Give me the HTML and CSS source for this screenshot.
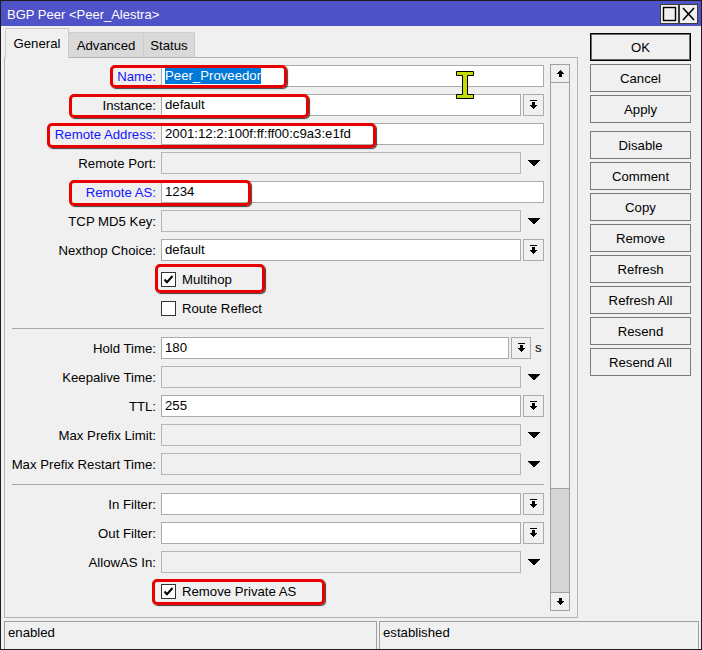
FILE: index.html
```html
<!DOCTYPE html>
<html>
<head>
<meta charset="utf-8">
<title>BGP Peer</title>
<link rel="stylesheet" href="styles.css">
</head>
<body>
<div class="window">
  <div class="titlebar">
    <span class="title">BGP Peer &lt;Peer_Alestra&gt;</span>
    <div class="tbtns">
      <span class="tbtn"><svg width="17" height="18" viewBox="0 0 17 18"><rect x="2.5" y="2.5" width="12" height="13" fill="none" stroke="#000" stroke-width="1.4"/></svg></span>
      <span class="tbtn"><svg width="17" height="18" viewBox="0 0 17 18"><path d="M3 3L14 15M14 3L3 15" stroke="#000" stroke-width="1.6"/></svg></span>
    </div>
  </div>

  <div class="body">
    <div class="left">
      <div class="tabs">
        <div class="tab active t-gen">General</div>
        <div class="tab t-adv">Advanced</div>
        <div class="tab t-st">Status</div>
      </div>
      <div class="panel">
        <div class="form">
          <div class="row"><span class="lbl req">Name:</span><div class="field"><div class="inp"><span class="sel">Peer_Proveedor</span></div></div></div>
          <div class="row"><span class="lbl">Instance:</span><div class="field"><div class="inp">default</div><span class="dbtn"><svg width="7" height="10" viewBox="0 0 7 10" shape-rendering="crispEdges"><path d="M0 0H7V1H0Z M2 2H5V5H2Z M0 5H7V6H6V7H5V8H4V9H3V8H2V7H1V6H0Z"/></svg></span></div></div>
          <div class="row"><span class="lbl req">Remote Address:</span><div class="field"><div class="inp">2001:12:2:100f:ff:ff00:c9a3:e1fd</div></div></div>
          <div class="row"><span class="lbl">Remote Port:</span><div class="field"><div class="inp dis"></div><span class="darr"><svg width="12" height="6" viewBox="0 0 12 6" shape-rendering="crispEdges"><path d="M0 0H12V1H11V2H10V3H9V4H8V5H7V6H5V5H4V4H3V3H2V2H1V1H0Z"/></svg></span></div></div>
          <div class="row"><span class="lbl req">Remote AS:</span><div class="field"><div class="inp">1234</div></div></div>
          <div class="row"><span class="lbl">TCP MD5 Key:</span><div class="field"><div class="inp dis"></div><span class="darr"><svg width="12" height="6" viewBox="0 0 12 6" shape-rendering="crispEdges"><path d="M0 0H12V1H11V2H10V3H9V4H8V5H7V6H5V5H4V4H3V3H2V2H1V1H0Z"/></svg></span></div></div>
          <div class="row"><span class="lbl">Nexthop Choice:</span><div class="field"><div class="inp">default</div><span class="dbtn"><svg width="7" height="10" viewBox="0 0 7 10" shape-rendering="crispEdges"><path d="M0 0H7V1H0Z M2 2H5V5H2Z M0 5H7V6H6V7H5V8H4V9H3V8H2V7H1V6H0Z"/></svg></span></div></div>
          <div class="row"><span class="lbl"></span><div class="field chk"><span class="cbox"><svg width="13" height="13" viewBox="0 0 13 13"><path d="M2.5 6.5L5 9.2L10.5 3" fill="none" stroke="#000" stroke-width="2"/></svg></span>Multihop</div></div>
          <div class="row"><span class="lbl"></span><div class="field chk"><span class="cbox"></span>Route Reflect</div></div>
          <div class="sep"></div>
          <div class="row"><span class="lbl">Hold Time:</span><div class="field"><div class="inp">180</div><span class="dbtn narrow"><svg width="7" height="10" viewBox="0 0 7 10" shape-rendering="crispEdges"><path d="M0 0H7V1H0Z M2 2H5V5H2Z M0 5H7V6H6V7H5V8H4V9H3V8H2V7H1V6H0Z"/></svg></span><span class="unit">s</span></div></div>
          <div class="row"><span class="lbl">Keepalive Time:</span><div class="field"><div class="inp dis"></div><span class="darr"><svg width="12" height="6" viewBox="0 0 12 6" shape-rendering="crispEdges"><path d="M0 0H12V1H11V2H10V3H9V4H8V5H7V6H5V5H4V4H3V3H2V2H1V1H0Z"/></svg></span></div></div>
          <div class="row"><span class="lbl">TTL:</span><div class="field"><div class="inp">255</div><span class="dbtn"><svg width="7" height="10" viewBox="0 0 7 10" shape-rendering="crispEdges"><path d="M0 0H7V1H0Z M2 2H5V5H2Z M0 5H7V6H6V7H5V8H4V9H3V8H2V7H1V6H0Z"/></svg></span></div></div>
          <div class="row"><span class="lbl">Max Prefix Limit:</span><div class="field"><div class="inp dis"></div><span class="darr"><svg width="12" height="6" viewBox="0 0 12 6" shape-rendering="crispEdges"><path d="M0 0H12V1H11V2H10V3H9V4H8V5H7V6H5V5H4V4H3V3H2V2H1V1H0Z"/></svg></span></div></div>
          <div class="row"><span class="lbl">Max Prefix Restart Time:</span><div class="field"><div class="inp dis"></div><span class="darr"><svg width="12" height="6" viewBox="0 0 12 6" shape-rendering="crispEdges"><path d="M0 0H12V1H11V2H10V3H9V4H8V5H7V6H5V5H4V4H3V3H2V2H1V1H0Z"/></svg></span></div></div>
          <div class="sep"></div>
          <div class="row"><span class="lbl">In Filter:</span><div class="field"><div class="inp"></div><span class="dbtn"><svg width="7" height="10" viewBox="0 0 7 10" shape-rendering="crispEdges"><path d="M0 0H7V1H0Z M2 2H5V5H2Z M0 5H7V6H6V7H5V8H4V9H3V8H2V7H1V6H0Z"/></svg></span></div></div>
          <div class="row"><span class="lbl">Out Filter:</span><div class="field"><div class="inp"></div><span class="dbtn"><svg width="7" height="10" viewBox="0 0 7 10" shape-rendering="crispEdges"><path d="M0 0H7V1H0Z M2 2H5V5H2Z M0 5H7V6H6V7H5V8H4V9H3V8H2V7H1V6H0Z"/></svg></span></div></div>
          <div class="row"><span class="lbl">AllowAS In:</span><div class="field"><div class="inp dis"></div><span class="darr"><svg width="12" height="6" viewBox="0 0 12 6" shape-rendering="crispEdges"><path d="M0 0H12V1H11V2H10V3H9V4H8V5H7V6H5V5H4V4H3V3H2V2H1V1H0Z"/></svg></span></div></div>
          <div class="row"><span class="lbl"></span><div class="field chk"><span class="cbox"><svg width="13" height="13" viewBox="0 0 13 13"><path d="M2.5 6.5L5 9.2L10.5 3" fill="none" stroke="#000" stroke-width="2"/></svg></span>Remove Private AS</div></div>
        </div>
        <div class="scroll">
          <span class="sbtn"><svg width="7" height="7" viewBox="0 0 7 7" shape-rendering="crispEdges"><path d="M3 0H4V1H5V2H6V3H7V4H5V7H2V4H0V3H1V2H2V1H3Z"/></svg></span>
          <span class="thumb"></span>
          <span class="track"></span>
          <span class="sbtn"><svg width="7" height="7" viewBox="0 0 7 7" shape-rendering="crispEdges"><path d="M2 0H5V3H7V4H6V5H5V6H4V7H3V6H2V5H1V4H0V3H2Z"/></svg></span>
        </div>
      </div>
    </div>

    <div class="actions">
      <span class="btn ok">OK</span>
      <span class="btn">Cancel</span>
      <span class="btn">Apply</span>
      <span class="btn spaced">Disable</span>
      <span class="btn">Comment</span>
      <span class="btn">Copy</span>
      <span class="btn">Remove</span>
      <span class="btn">Refresh</span>
      <span class="btn">Refresh All</span>
      <span class="btn">Resend</span>
      <span class="btn">Resend All</span>
    </div>
  </div>

  <div class="statusbar">
    <div class="sb sb1">enabled</div>
    <div class="sb sb2">established</div>
  </div>

  <div class="mark m-name"></div>
  <div class="mark m-inst"></div>
  <div class="mark m-addr"></div>
  <div class="mark m-as"></div>
  <div class="mark m-multi"></div>
  <div class="mark m-rpas"></div>

  <svg class="ibeam" width="18" height="28" viewBox="0 0 18 28"><path d="M0.5 0.5H17.5V4.5H11.5V23.5H17.5V27.5H0.5V23.5H6.5V4.5H0.5Z" fill="#c4dc00" stroke="#000" stroke-width="1"/></svg>
</div>
</body>
</html>
```

FILE: styles.css
```css
* { box-sizing: border-box; }
html, body { margin: 0; padding: 0; }
body {
  font-family: "Liberation Sans", Arial, sans-serif;
  font-size: 13.2px;
  color: #000;
  background: #f0f0f0;
}

.window {
  position: relative;
  width: 702px;
  height: 650px;
  border: 1px solid #1e1e1e;
  background: #f0f0f0;
  display: flex;
  flex-direction: column;
  overflow: hidden;
}

/* title bar */
.titlebar {
  flex: none;
  height: 25px;
  background: #5052c8;
  color: #fff;
  display: flex;
  align-items: flex-start;
  justify-content: space-between;
  padding: 0 3px 0 6px;
}
.title { margin-top: 6px; line-height: 16px; white-space: nowrap; font-size: 13px; }
.tbtns { display: flex; margin-top: 3px; }
.tbtn {
  width: 19px;
  height: 20px;
  background: #f0f0f0;
  border: 1px solid #3c3c3c;
  display: flex;
  align-items: center;
  justify-content: center;
}

/* main body */
.body {
  flex: none;
  height: 594px;
  display: flex;
  padding: 2px 0 0 3px;
}
.left { width: 574px; display: flex; flex-direction: column; }

.tabs {
  height: 29px;
  display: flex;
  align-items: flex-end;
  padding-left: 1px;
  position: relative;
  z-index: 1;
}
.tab {
  height: 25px;
  border: 1px solid #cdcdcd;
  border-bottom: none;
  background: #d9d9d9;
  display: flex;
  align-items: center;
  justify-content: center;
  white-space: nowrap;
}
.tab.active { height: 30px; margin-bottom: -1px; background: #f0f0f0; }
.t-gen { width: 64px; }
.t-adv { width: 75px; border-left: none; }
.t-st { width: 51px; border-left: none; }

.panel {
  height: 561px;
  border: 1px solid #b4b4b4;
  display: flex;
  padding-right: 7px;
}

.form {
  width: 545px;
  padding: 7px 6px 0 0;
  display: flex;
  flex-direction: column;
}
.row {
  display: grid;
  grid-template-columns: 151px 383px;
  column-gap: 5px;
  height: 22px;
  margin-bottom: 7px;
  align-items: center;
}
.lbl { text-align: right; white-space: nowrap; }
.lbl.req { color: #1414ff; }

.field { display: flex; height: 22px; align-items: stretch; }
.inp {
  flex: 1;
  border: 1px solid #ababab;
  background: #fff;
  padding-left: 3px;
  line-height: 20px;
  white-space: nowrap;
  overflow: hidden;
}
.inp.dis { background: #f0f0f0; border-color: #b6b6b6; }
.sel { background: #0078d7; color: #fff; padding: 2px 0 1px; }

.dbtn {
  flex: none;
  width: 21px;
  margin-left: 2px;
  border: 1px solid #ababab;
  background: #f0f0f0;
  display: flex;
  align-items: center;
  justify-content: center;
}
.dbtn.narrow { width: 20px; }
.unit { flex: none; width: 13px; padding-left: 4px; line-height: 22px; }
.darr {
  flex: none;
  width: 23px;
  display: flex;
  align-items: center;
  justify-content: flex-end;
  padding-right: 4px;
}

.field.chk { align-items: center; gap: 6px; white-space: nowrap; }
.cbox {
  width: 15px;
  height: 15px;
  border: 1px solid #333;
  background: #fff;
  display: flex;
  align-items: center;
  justify-content: center;
}

.sep { height: 1px; background: #a8a8a8; margin: 2px 0 8px 7px; }

/* scrollbar */
.scroll {
  width: 20px;
  margin: 6px 0;
  display: flex;
  flex-direction: column;
}
.sbtn {
  height: 19px;
  border: 1px solid #a0a0a0;
  background: #f0f0f0;
  display: flex;
  align-items: center;
  justify-content: center;
}
.thumb {
  height: 406px;
  border: 1px solid #a0a0a0;
  border-top: none;
  background: #f0f0f0;
}
.track {
  flex: 1;
  background: #d6d6d6;
  border-left: 1px solid #a0a0a0;
  border-right: 1px solid #a0a0a0;
}

/* action buttons */
.actions {
  margin-left: 12px;
  width: 101px;
  padding-top: 5px;
  display: flex;
  flex-direction: column;
  gap: 3px;
}
.btn {
  height: 28px;
  border: 1px solid #7a7a7a;
  background: #f0f0f0;
  display: flex;
  align-items: center;
  justify-content: center;
  white-space: nowrap;
}
.btn.ok { border-color: #000; box-shadow: inset 0 0 0 1px #6a6a6a; }
.btn.spaced { margin-top: 5px; }

/* status bar */
.statusbar {
  flex: 1;
  display: flex;
  gap: 2px;
  padding: 1px 2px 0 3px;
}
.sb {
  border: 1px solid #a0a0a0;
  border-bottom: none;
  padding-left: 3px;
  line-height: 22px;
  white-space: nowrap;
}
.sb1 { width: 373px; }
.sb2 { flex: 1; }

/* annotation overlays */
.mark {
  position: absolute;
  border: 3px solid #e60000;
  border-radius: 5px;
  box-shadow: 1px 1px 1px rgba(0, 0, 0, 0.75);
}
.m-name  { left: 109px; top: 64px;  width: 177px; height: 23px; }
.m-inst  { left: 68px;  top: 93px;  width: 240px; height: 24px; }
.m-addr  { left: 46px;  top: 122px; width: 329px; height: 25px; }
.m-as    { left: 68px;  top: 179px; width: 182px; height: 26px; }
.m-multi { left: 154px; top: 263px; width: 110px; height: 29px; }
.m-rpas  { left: 151px; top: 578px; width: 173px; height: 26px; }

.ibeam { position: absolute; left: 455px; top: 70px; }
```
